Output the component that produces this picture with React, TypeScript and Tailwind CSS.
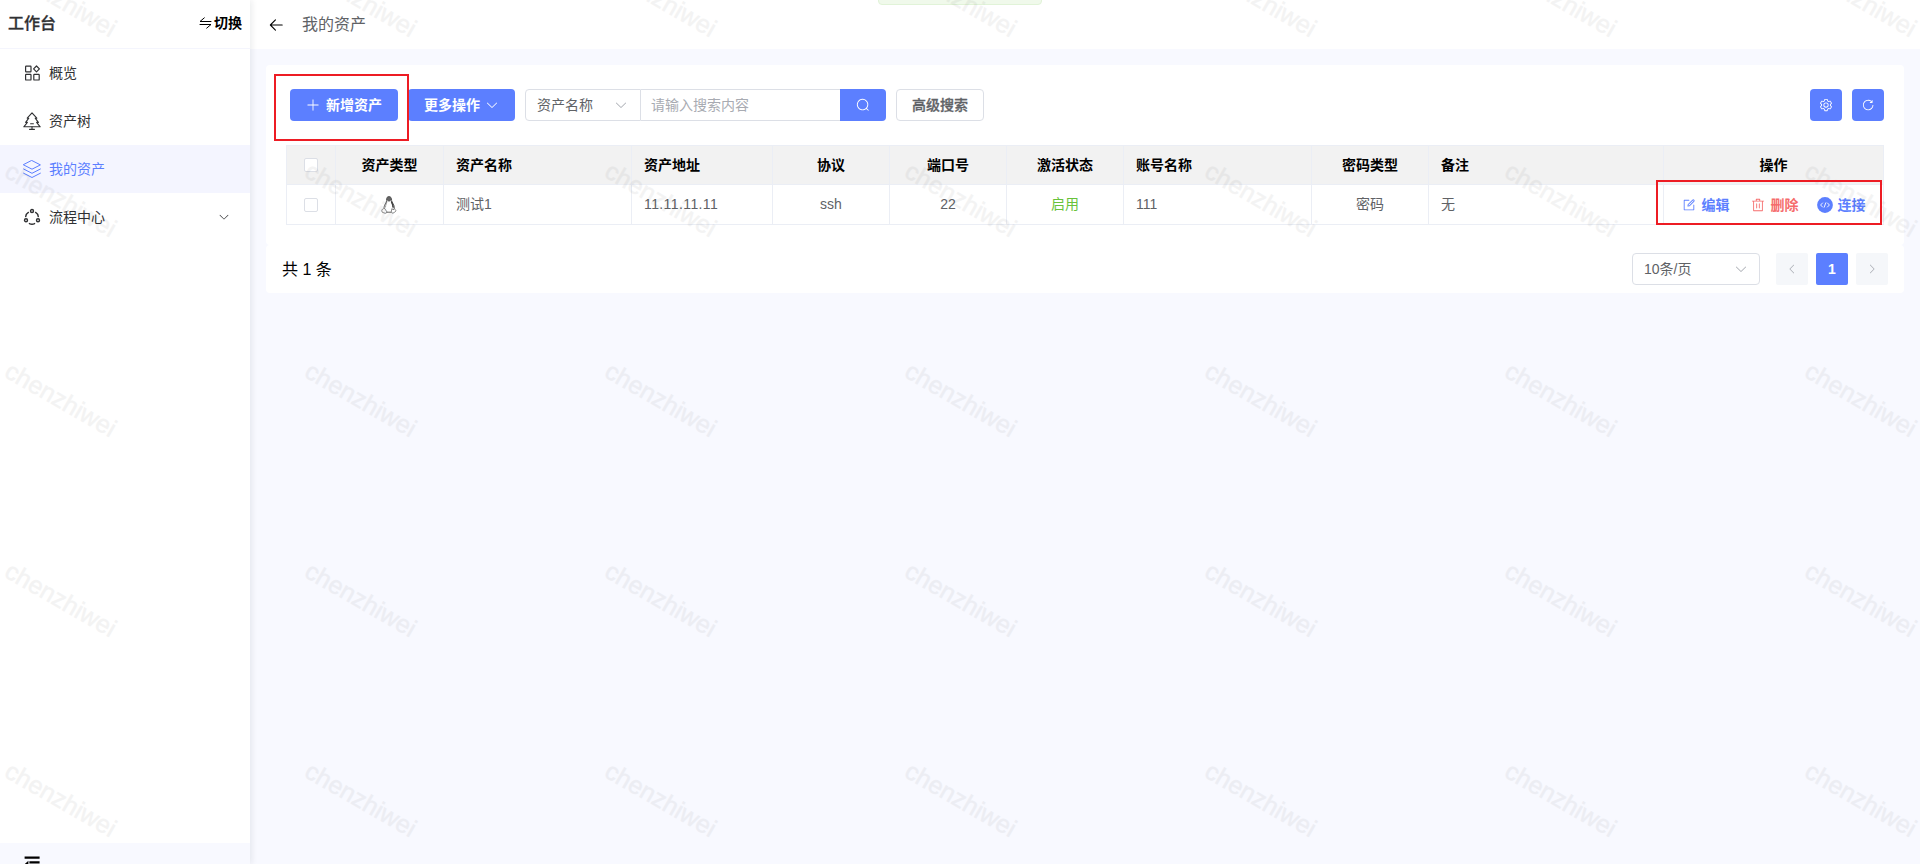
import React from "react";

const ICONS = {
  plus: "M480 480V128a32 32 0 0 1 64 0v352h352a32 32 0 1 1 0 64H544v352a32 32 0 1 1-64 0V544H128a32 32 0 0 1 0-64z",
  down: "M831.872 340.864 512 652.672 192.128 340.864a30.592 30.592 0 0 0-42.752 0 29.12 29.12 0 0 0 0 41.6L489.664 714.24a32 32 0 0 0 44.672 0l340.288-331.712a29.12 29.12 0 0 0 0-41.728 30.592 30.592 0 0 0-42.752 0z",
  search: "m795.904 750.72 124.992 124.928a32 32 0 0 1-45.248 45.248L750.656 795.904a416 416 0 1 1 45.248-45.248zM480 832a352 352 0 1 0 0-704 352 352 0 0 0 0 704z",
  setting: "M600.704 64a32 32 0 0 1 30.464 22.208l35.2 109.376c14.784 7.232 28.928 15.36 42.432 24.512l112.384-24.192a32 32 0 0 1 34.432 15.36L944.32 364.8a32 32 0 0 1-4.032 37.504l-77.12 85.12a357.12 357.12 0 0 1 0 49.024l77.12 85.248a32 32 0 0 1 4.032 37.504l-88.704 153.6a32 32 0 0 1-34.432 15.296L708.8 803.904c-13.44 9.088-27.648 17.28-42.368 24.512l-35.264 109.376A32 32 0 0 1 600.704 960H423.296a32 32 0 0 1-30.464-22.208L357.696 828.48a351.616 351.616 0 0 1-42.56-24.64l-112.32 24.256a32 32 0 0 1-34.432-15.36L79.68 659.2a32 32 0 0 1 4.032-37.504l77.12-85.248a357.12 357.12 0 0 1 0-48.896l-77.12-85.248A32 32 0 0 1 79.68 364.8l88.704-153.6a32 32 0 0 1 34.432-15.296l112.32 24.256c13.568-9.152 27.776-17.408 42.56-24.64l35.2-109.312A32 32 0 0 1 423.232 64H600.64zm-23.424 64H446.72l-36.352 113.088-24.512 11.968a294.113 294.113 0 0 0-34.816 20.096l-22.656 15.36-116.224-25.088-65.28 113.152 79.68 88.192-1.92 27.136a293.12 293.12 0 0 0 0 40.192l1.92 27.136-79.808 88.192 65.344 113.152 116.224-25.024 22.656 15.296a294.113 294.113 0 0 0 34.816 20.096l24.512 11.968L446.72 896h130.688l36.48-113.152 24.448-11.904a288.282 288.282 0 0 0 34.752-20.096l22.592-15.296 116.288 25.024 65.28-113.152-79.744-88.192 1.92-27.136a293.12 293.12 0 0 0 0-40.256l-1.92-27.136 79.808-88.128-65.344-113.152-116.288 24.96-22.592-15.232a287.616 287.616 0 0 0-34.752-20.096l-24.448-11.904L577.344 128zM512 320a192 192 0 1 1 0 384 192 192 0 0 1 0-384zm0 64a128 128 0 1 0 0 256 128 128 0 0 0 0-256z",
  refresh: "M784.512 230.272v-50.56a32 32 0 1 1 64 0v149.056a32 32 0 0 1-32 32H667.52a32 32 0 1 1 0-64h92.992A320 320 0 1 0 524.8 833.152a320 320 0 0 0 320-320h64a384 384 0 0 1-384 384 384 384 0 0 1-384-384 384 384 0 0 1 643.712-282.88z",
  edit: "M832 512a32 32 0 1 1 64 0v352a32 32 0 0 1-32 32H160a32 32 0 0 1-32-32V160a32 32 0 0 1 32-32h352a32 32 0 0 1 0 64H192v640h640V512zM469.952 554.24l52.8-7.552L847.104 222.4a32 32 0 1 0-45.248-45.248L477.44 501.44l-7.552 52.8zM892.352 131.84a96 96 0 0 1 0 135.808l-331.84 331.84a32 32 0 0 1-18.112 9.088L436.8 623.68a32 32 0 0 1-36.224-36.224l15.104-105.6a32 32 0 0 1 9.024-18.112l331.904-331.84a96 96 0 0 1 135.744 0z",
  del: "M160 256H96a32 32 0 0 1 0-64h256V95.936a32 32 0 0 1 32-32h256a32 32 0 0 1 32 32V192h256a32 32 0 1 1 0 64h-64v672a32 32 0 0 1-32 32H192a32 32 0 0 1-32-32V256zm448-64v-64H416v64h192zM224 896h576V256H224v640zm192-128a32 32 0 0 1-32-32V416a32 32 0 0 1 64 0v320a32 32 0 0 1-32 32zm192 0a32 32 0 0 1-32-32V416a32 32 0 0 1 64 0v320a32 32 0 0 1-32 32z",
  back: "M224 480h640a32 32 0 1 1 0 64H224a32 32 0 0 1 0-64zM237.248 512l265.408 265.344a32 32 0 0 1-45.312 45.312l-288-288a32 32 0 0 1 0-45.312l288-288a32 32 0 1 1 45.312 45.312L237.248 512z",
};

const Icon = ({ name, className = "w-[14px] h-[14px]" }: { name: keyof typeof ICONS; className?: string }) => (
  <svg viewBox="0 0 1024 1024" fill="currentColor" className={`shrink-0 ${className}`}>
    <path d={ICONS[name]} />
  </svg>
);

const OverviewIcon = () => (
  <svg viewBox="0 0 18 18" className="w-[18px] h-[18px]" fill="none" stroke="currentColor" strokeWidth="1.2">
    <rect x="2.6" y="2.2" width="5.400" height="5.600" rx=".6" />
    <rect x="2.6" y="10.400" width="5.400" height="5.600" rx=".6" />
    <rect x="10.800" y="10.400" width="5.400" height="5.600" rx=".6" />
    <path d="M13.500 2 16.400 4.900 13.500 7.800 10.600 4.900Z" strokeLinejoin="round" />
  </svg>
);

const TreeIcon = () => (
  <svg viewBox="0 0 18 18" className="w-[18px] h-[18px]" fill="none" stroke="currentColor" strokeWidth="1.1" strokeLinejoin="round" strokeLinecap="round">
    <path d="M9 .8 4.200 6.200h1.600L2.600 10.400h1.800L.8 14.800h16.400l-3.600-4.400h1.800l-3.200-4.200h1.600Z" />
    <path d="M7.600 11.800h2.800M9 14.800v2.600M6.600 17.400h4.800" />
  </svg>
);

const LayersIcon = () => (
  <svg viewBox="0 0 18 18" className="w-[18px] h-[18px]" fill="none" stroke="currentColor" strokeWidth="1" strokeLinejoin="round" strokeLinecap="round">
    <path d="M9 .6 17.400 4.900 9 9.200.6 4.900Z" />
    <path d="M.6 9 9 13.300 17.400 9M.6 13.200 9 17.500l8.400-4.300" />
  </svg>
);

const FlowIcon = () => (
  <svg viewBox="0 0 18 18" className="w-[18px] h-[18px]" fill="none" stroke="currentColor" strokeWidth="1.4" strokeLinecap="round">
    <circle cx="9" cy="3" r="1.500" />
    <circle cx="3" cy="12.200" r="1.500" />
    <circle cx="15" cy="12.200" r="1.500" />
    <path d="M5.400 4.400Q2.900 5.900 2.700 8.600M12.600 4.400q2.500 1.500 2.700 4.200M6.400 15.600q2.600 1.200 5.200 0" />
  </svg>
);

const LinuxIcon = () => (
  <svg viewBox="0 0 16 18" className="w-[16px] h-[18px] mr-[2px]" fill="none" stroke="#3c3c3c" strokeWidth=".8" strokeLinejoin="round">
    <path d="M5.600 4.400C5.400 1.800 6.300.6 8 .6s2.700 1.400 2.600 3.800c.1 1.900 2.800 4.200 2.800 7.400 0 .8-.3 1.400-.8 2M5.600 4.400C5.700 6.600 3 8.800 2.900 12.200" />
    <path d="M6 5C5.800 7 4.400 9 4.500 11.400M10.300 5c.3 2 1.500 3.400 1.500 6" strokeWidth=".5" />
    <path d="M6.200 1.400Q8 .2 9.800 1.400L10.200 4 8 5.400 5.900 4Z" fill="#666" strokeWidth=".4" />
    <path d="M10.300 5.500c1 2 2 3.500 1.900 6.300" strokeWidth="1.400" />
    <path d="M3 12.200c-.5 1.100-2 .9-2.200 1.700-.2.800.2 1.700.4 2.300 1.300.4 2.400 1.200 3.700 1 1.200-.3 1.100-1.500.4-2.300C4.500 13.900 3.900 12.300 3 12.200ZM11 12.600c.3 1.300 2.100 1.200 2.500.2.500.8 1.500 1.400 1.500 2.100-1 .8-1.700 1.900-2.900 2.200-1.100.2-1.800-.5-1.700-1.500.1-1 .1-2.200.6-3Z" strokeWidth=".6" fill="#fff" />
    <path d="M5.600 16.200h4.500" />
  </svg>
);

const ConnectIcon = () => (
  <svg viewBox="0 0 16 16" className="w-[16px] h-[16px]">
    <circle cx="8" cy="8" r="7.900" fill="#5c7fff" />
    <path d="M5.800 5.700 3.600 8l2.200 2.300M10.200 5.700 12.400 8l-2.200 2.300M8.900 5.500l-1.800 5" fill="none" stroke="#fff" strokeWidth=".9" />
  </svg>
);

const menus = [
  { label: "概览", icon: <OverviewIcon /> },
  { label: "资产树", icon: <TreeIcon /> },
  { label: "我的资产", icon: <LayersIcon />, active: true },
  { label: "流程中心", icon: <FlowIcon />, arrow: true },
];

const CheckBox = () => <span className="block w-[14px] h-[14px] rounded-[2px] border border-[#dcdfe6] bg-white" />;

const columns = [
  { title: <CheckBox />, value: <CheckBox />, center: true },
  { title: "资产类型", value: <LinuxIcon />, center: true },
  { title: "资产名称", value: "测试1", text: true },
  { title: "资产地址", value: <span className="tracking-[0.4px]">11.11.11.11</span>, text: true },
  { title: "协议", value: "ssh", center: true, text: true },
  { title: "端口号", value: "22", center: true, text: true },
  { title: "激活状态", value: <span className="text-[#67c23a]">启用</span>, center: true, text: true },
  { title: "账号名称", value: "111", text: true },
  { title: "密码类型", value: "密码", center: true, text: true },
  { title: "备注", value: "无", text: true },
];

const GRID = "grid grid-cols-[49px_108px_188px_141px_117px_117px_117px_188px_117px_235px_220px] border-l border-[#ebeef5]";
const CELL = "flex items-center px-3 border-r border-b border-[#ebeef5]";

const Sidebar = () => (
  <aside className="w-[250px] shrink-0 h-full flex flex-col bg-white relative z-[1] shadow-[2px_0_6px_rgba(0,21,41,0.08)]">
    <div className="h-[49px] border-b border-[#f4f5fd] flex items-center justify-between pl-2 pr-2">
      <span className="text-base font-medium text-[#303133] [-webkit-text-stroke:0.3px]">工作台</span>
      <span className="flex items-center gap-[2px] pb-[2px] text-sm font-bold text-black">
        <svg viewBox="0 0 13 12" className="w-[13px] h-[12px]" fill="none" stroke="currentColor" strokeWidth="1">
          <path d="M5.600.6 1 4.500h11.400M.6 7.500H12L7.400 11.400" />
        </svg>
        切换
      </span>
    </div>
    {menus.map((m) => (
      <div
        key={m.label}
        className={`h-12 flex items-center pl-[23px] pr-5 text-sm ${m.active ? "bg-[#f4f5ff] text-[#5c7fff]" : "text-[#303133]"}`}
      >
        {m.icon}
        <span className="ml-2 flex-1">{m.label}</span>
        {m.arrow && <Icon name="down" className="w-3 h-3" />}
      </div>
    ))}
    <div className="mt-auto h-[21px] bg-[#f8f9ff] overflow-hidden pl-6 pt-[13px]">
      <svg viewBox="0 0 16 16" className="w-[16px] h-[16px]" fill="#000">
        <path d="M.6.400h15v2.400H.6zM5.400 5.200h10.200v2.400H5.400zM5.400 9.600h10.200v2.200H5.400zM.6 14h15v2H.6zM.8 8 4.400 4.800v7z" />
      </svg>
    </div>
  </aside>
);

const Toolbar = () => (
  <div className="flex items-center h-8 pl-1 text-sm">
    <button className="w-[108px] h-8 rounded bg-[#5c7fff] text-white font-bold flex items-center justify-center gap-[6px]">
      <Icon name="plus" /> 新增资产
    </button>
    <button className="ml-[10px] w-[107px] h-8 rounded bg-[#5c7fff] text-white font-bold flex items-center justify-center gap-[5px]">
      更多操作 <Icon name="down" />
    </button>
    <div className="ml-[10px] flex h-8">
      <div className="w-[116px] flex items-center justify-between pl-[11px] pr-3 rounded-l border border-[#dcdfe6] text-[#606266]">
        资产名称
        <Icon name="down" className="w-[14px] h-[14px] text-[#a8abb2]" />
      </div>
      <div className="w-[199px] flex items-center pl-[10px] border-y border-[#dcdfe6] text-[#a8abb2]">请输入搜索内容</div>
      <button className="w-[46px] rounded-r bg-[#5c7fff] text-white flex items-center justify-center">
        <Icon name="search" />
      </button>
    </div>
    <button className="ml-[10px] w-[88px] h-8 rounded border border-[#dcdfe6] text-[#606266] font-medium [-webkit-text-stroke:0.3px]">高级搜索</button>
    <button className="ml-auto w-8 h-8 rounded bg-[#5c7fff] text-white flex items-center justify-center">
      <Icon name="setting" />
    </button>
    <button className="ml-[10px] w-8 h-8 rounded bg-[#5c7fff] text-white flex items-center justify-center">
      <Icon name="refresh" />
    </button>
  </div>
);

const AssetTable = () => (
  <div className="mt-6 border-t border-[#ebeef5] text-sm">
    <div className={`${GRID} h-[39px] bg-[#f2f2f2] text-black font-bold`}>
      {columns.map((c, i) => (
        <div key={i} className={`${CELL} ${c.center ? "justify-center" : ""}`}>{c.title}</div>
      ))}
      <div className={`${CELL} justify-center`}>操作</div>
    </div>
    <div className={`${GRID} h-[40px] text-[#606266]`}>
      {columns.map((c, i) => (
        <div key={i} className={`${CELL} ${c.center ? "justify-center" : ""} ${c.text ? "pb-[2px]" : ""}`}>{c.value}</div>
      ))}
      <div className={`${CELL} justify-center font-bold`}>
        <span className="flex items-center text-[#5c7fff]"><Icon name="edit" /><span className="ml-[6px]">编辑</span></span>
        <span className="ml-[21px] flex items-center text-[#f56c6c]"><Icon name="del" /><span className="ml-[6px]">删除</span></span>
        <span className="ml-[18px] flex items-center text-[#5c7fff]"><ConnectIcon /><span className="ml-[5px]">连接</span></span>
      </div>
    </div>
  </div>
);

const Pagination = () => (
  <div className="h-12 rounded bg-white pl-4 pr-4 flex items-center text-sm">
    <span className="pt-[2px] text-base text-black">共 1 条</span>
    <div className="ml-auto w-[128px] h-8 rounded border border-[#dcdfe6] flex items-center justify-between pl-[11px] pr-[11px] text-[#606266]">
      10条/页
      <Icon name="down" className="w-[14px] h-[14px] text-[#a8abb2]" />
    </div>
    <div className="ml-4 w-8 h-8 rounded-[2px] bg-[#f5f7fa] text-[#a8abb2] flex items-center justify-center">
      <Icon name="down" className="w-3 h-3 rotate-90" />
    </div>
    <div className="ml-2 w-8 h-8 rounded-[2px] bg-[#5c7fff] text-white font-bold flex items-center justify-center">1</div>
    <div className="ml-2 w-8 h-8 rounded-[2px] bg-[#f5f7fa] text-[#a8abb2] flex items-center justify-center">
      <Icon name="down" className="w-3 h-3 -rotate-90" />
    </div>
  </div>
);

const Watermark = () => (
  <div className="absolute inset-0 z-10 overflow-hidden pointer-events-none">
    <div className="grid grid-cols-[repeat(7,300px)] auto-rows-[200px] -ml-[89px] -mt-[101px]">
      {Array.from({ length: 35 }).map((_, i) => (
        <div key={i} className="flex items-center justify-center">
          <span className="rotate-30 text-[25px] leading-none text-[#000] opacity-[0.045] [-webkit-text-stroke:0.6px]">chenzhiwei</span>
        </div>
      ))}
    </div>
  </div>
);

export default function App() {
  return (
    <div className="relative w-full h-screen overflow-hidden flex bg-[#f8f9ff] font-['Liberation_Sans','Noto_Sans_CJK_SC',sans-serif]">
      <Sidebar />
      <main className="flex-1 flex flex-col">
        <header className="h-[49px] bg-white flex items-center pl-[17px]">
          <Icon name="back" className="w-[18px] h-[18px] text-black" />
          <span className="ml-[17px] text-base text-[#606266]">我的资产</span>
        </header>
        <div className="p-4">
          <div className="bg-white px-5 pt-6 pb-5 rounded">
            <Toolbar />
            <AssetTable />
          </div>
          <Pagination />
        </div>
      </main>

      {/* success message sliding out */}
      <div className="absolute left-[878px] top-[-35px] w-[164px] h-10 rounded border border-[#e1f3d8] bg-[#f0f9eb]" />
      <Watermark />
      {/* highlight frames */}
      <div className="absolute z-20 left-[274px] top-[74px] w-[135px] h-[67px] border-2 border-[#ed1c24]" />
      <div className="absolute z-20 left-[1656px] top-[180px] w-[226px] h-[45px] border-2 border-[#ed1c24]" />
    </div>
  );
}
